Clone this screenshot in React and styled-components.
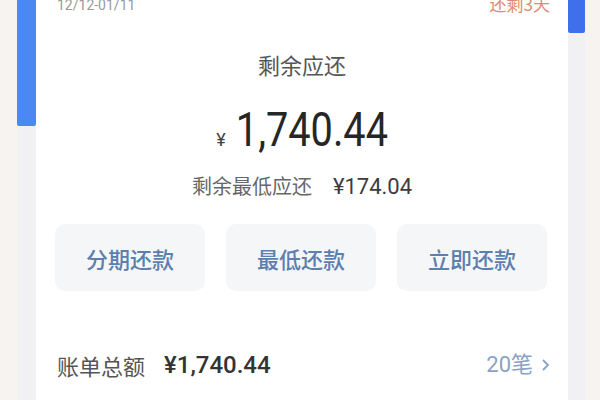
import React from "react";
import styled, { createGlobalStyle } from "styled-components";

const Global = createGlobalStyle`
  html, body { margin: 0; padding: 0; }
  body {
    width: 600px;
    height: 400px;
    overflow: hidden;
    background: #f7f3f1;
    font-family: "Noto Sans CJK SC", "Noto Sans", sans-serif;
  }
`;

const Page = styled.div`
  display: flex;
  height: 400px;
  width: 600px;
  overflow: hidden;
  background: #f7f3f1;
`;

const Gap = styled.div`
  width: ${(p) => p.$w}px;
  flex-shrink: 0;
`;

const Rail = styled.div`
  width: ${(p) => p.$w}px;
  flex-shrink: 0;
  background: #f1f1f3;
  display: flex;
  flex-direction: column;
`;

const RailFill = styled.div`
  height: ${(p) => p.$h}px;
  background: ${(p) => p.$color};
  border-radius: 0 0 2px 2px;
`;

const Card = styled.div`
  flex: 1;
  background: #ffffff;
  display: flex;
  flex-direction: column;
  min-width: 0;
`;

const TopRow = styled.div`
  display: flex;
  justify-content: space-between;
  align-items: flex-end;
  padding: 0 18px 0 21px;
  margin-top: -6px;
  height: 20px;
`;

const DateText = styled.span`
  font-family: "Roboto", "Noto Sans", sans-serif;
  font-size: 14px;
  color: #9a9a9a;
  line-height: 18px;
`;

const DueText = styled.span`
  font-size: 17px;
  color: #df8a6e;
  line-height: 20px;
`;

const Center = styled.div`
  display: flex;
  flex-direction: column;
  align-items: center;
`;

const Label = styled.div`
  margin-top: 36px;
  font-size: 22px;
  line-height: 28px;
  color: #555555;
`;

const AmountRow = styled.div`
  margin-top: 27px;
  padding-left: 18px;
  display: flex;
  align-items: baseline;
  color: #222222;
  height: 50px;
`;

const Yen = styled.span`
  font-family: "Roboto", sans-serif;
  font-size: 18px;
  color: #444;
  margin-right: -8px;
`;

const BigNum = styled.span`
  display: inline-block;
  font-family: "Roboto", sans-serif;
  font-size: 49px;
  line-height: 50px;
  color: #262626;
  transform: scaleX(0.81);
  transform-origin: center;
`;

const MinRow = styled.div`
  margin-top: 18px;
  display: flex;
  align-items: baseline;
  gap: 21px;
  line-height: 26px;
`;

const MinLabel = styled.span`
  font-size: 20px;
  color: #666666;
`;

const MinValue = styled.span`
  font-family: "Roboto", sans-serif;
  font-size: 22px;
  color: #3c3c3c;
`;

const Buttons = styled.div`
  display: grid;
  grid-template-columns: repeat(3, 1fr);
  gap: 21px;
  padding: 0 21px 0 19px;
  margin-top: 24px;
`;

const Btn = styled.div`
  height: 67px;
  border-radius: 10px;
  background: #f5f6f8;
  display: flex;
  align-items: center;
  justify-content: center;
  font-size: 22px;
  font-weight: 500;
  color: #5d7fae;
`;

const BillRow = styled.div`
  margin-top: 59px;
  display: flex;
  align-items: center;
  justify-content: space-between;
  padding: 0 18px 0 21px;
  line-height: 30px;
`;

const BillLeft = styled.div`
  display: flex;
  align-items: center;
  gap: 19px;
`;

const BillLabel = styled.span`
  font-size: 22px;
  color: #555555;
`;

const BillValue = styled.span`
  font-family: "Roboto", sans-serif;
  font-size: 24px;
  font-weight: 500;
  color: #333333;
`;

const Count = styled.span`
  display: flex;
  align-items: center;
  gap: 8px;
  font-size: 22px;
  color: #8aa3c4;
  font-family: "Roboto", "Noto Sans CJK SC", sans-serif;
`;

export default function App() {
  return (
    <>
      <Global />
      <Page>
        <Gap $w={17} />
        <Rail $w={19}>
          <RailFill $h={126} $color="#4b88f2" />
        </Rail>
        <Card>
          <TopRow>
            <DateText>12/12-01/11</DateText>
            <DueText>还剩3天</DueText>
          </TopRow>
          <Center>
            <Label>剩余应还</Label>
            <AmountRow>
              <Yen>¥</Yen>
              <BigNum>1,740.44</BigNum>
            </AmountRow>
            <MinRow>
              <MinLabel>剩余最低应还</MinLabel>
              <MinValue>¥174.04</MinValue>
            </MinRow>
          </Center>
          <Buttons>
            <Btn>分期还款</Btn>
            <Btn>最低还款</Btn>
            <Btn>立即还款</Btn>
          </Buttons>
          <BillRow>
            <BillLeft>
              <BillLabel>账单总额</BillLabel>
              <BillValue>¥1,740.44</BillValue>
            </BillLeft>
            <Count>
              20笔
              <svg width="9" height="14" viewBox="0 0 9 14">
                <path d="M2 2 L7 7 L2 12" fill="none" stroke="#8aa3c4" strokeWidth="1.8" />
              </svg>
            </Count>
          </BillRow>
        </Card>
        <Rail $w={17}>
          <RailFill $h={33} $color="#3f6fea" />
        </Rail>
        <Gap $w={15} />
      </Page>
    </>
  );
}
